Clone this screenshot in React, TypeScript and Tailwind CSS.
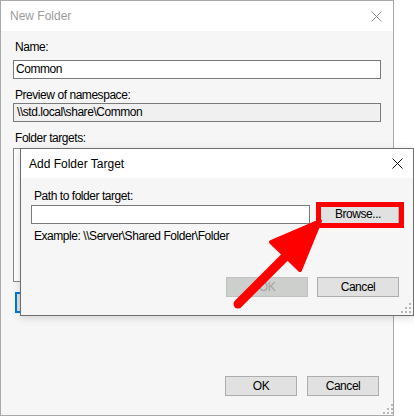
import React from "react";

const sans = "font-['Liberation_Sans',Arial,sans-serif]";

const CloseX = ({ color }: { color: string }) => (
  <svg width="11" height="11" viewBox="0 0 11 11">
    <path d="M0.5 0.5 L10.5 10.5 M10.5 0.5 L0.5 10.5" stroke={color} strokeWidth="1" />
  </svg>
);

const Grip = () => (
  <svg width="10" height="10" viewBox="0 0 10 10">
    {[
      [8, 0],
      [4, 4],
      [8, 4],
      [0, 8],
      [4, 8],
      [8, 8],
    ].map(([x, y], i) => (
      <rect key={i} x={x} y={y} width="2" height="2" fill="#b9b9b9" />
    ))}
  </svg>
);

const Button = ({
  label,
  width,
  disabled,
}: {
  label: string;
  width: string;
  disabled?: boolean;
}) => (
  <div
    className={`${width} h-[20px] flex items-center justify-center border text-[12px] tracking-[-0.45px] leading-none ${
      disabled
        ? "bg-[#cccfcc] border-[#bfc2bf] text-[#a2a5a2]"
        : "bg-[#e1e1e1] border-[#adadad] text-black"
    }`}
  >
    {label}
  </div>
);

export default function App() {
  return (
    <div className={`relative w-[414px] h-[416px] bg-white overflow-hidden ${sans}`}>
      {/* New Folder window */}
      <div className="flex flex-col w-[394px] h-[416px] border border-[#a9a9a9] bg-[#f6f6f6]">
        <div className="h-[30px] shrink-0 bg-white flex items-center justify-between pl-[9px] pr-[11px]">
          <span className="text-[12px] text-[#9b9b9b]">New Folder</span>
          <CloseX color="#8e8e8e" />
        </div>

        <div className="flex flex-col flex-1 px-[12px] pt-[10px] pb-[19px] text-[12px] tracking-[-0.45px] leading-[13px] text-black">
          <span className="ml-[2px]">Name:</span>
          <div className="mt-[6px] h-[19px] w-[368px] bg-white border border-[#7a7a7a] flex items-center px-[2px]">
            Common
          </div>

          <span className="mt-[10px] ml-[2px]">Preview of namespace:</span>
          <div className="mt-[1px] h-[19px] w-[368px] bg-[#f0f0f0] border border-[#7a7a7a] flex items-center px-[3px]">
            \\std.local\share\Common
          </div>

          <span className="mt-[10px] ml-[2px]">Folder targets:</span>
          <div className="mt-[3px] h-[134px] w-[368px] bg-white border border-[#828790]" />

          <div className="mt-[10px] ml-[2px] h-[21px] w-[72px] border-2 border-[#0078d7] bg-[#e1e1e1]" />

          <div className="flex-1" />
          <div className="flex justify-end gap-[10px] pr-[2px]">
            <Button label="OK" width="w-[72px]" />
            <Button label="Cancel" width="w-[72px]" />
          </div>
        </div>
      </div>
      <div className="absolute left-[383px] top-[404px]">
        <Grip />
      </div>

      {/* Add Folder Target dialog */}
      <div className="absolute left-[20px] top-[148px] w-[394px] h-[168px] flex flex-col border border-[#6e6e6e] bg-[#f6f6f6] shadow-[0_2px_8px_rgba(0,0,0,0.15)]">
        <div className="h-[29px] shrink-0 bg-white flex items-center justify-between pl-[8px] pr-[10px]">
          <span className="text-[12px] text-black">Add Folder Target</span>
          <CloseX color="#111111" />
        </div>
        <div className="flex flex-col flex-1 pl-[10px] pr-[14px] pt-[12px] pb-[18px] text-[12px] tracking-[-0.45px] leading-[13px] text-black">
          <span className="ml-[3px]">Path to folder target:</span>
          <div className="mt-[1px] flex items-start gap-[7px]">
            <div className="mt-[1px] h-[19px] w-[279px] bg-white border border-[#7a7a7a]" />
            <Button label="Browse..." width="w-[82px]" />
          </div>
          <span className="mt-[6px] ml-[3px]">Example: \\Server\Shared Folder\Folder</span>
          <div className="flex-1" />
          <div className="flex justify-end gap-[9px]">
            <Button label="OK" width="w-[82px]" disabled />
            <Button label="Cancel" width="w-[82px]" />
          </div>
        </div>
        <div className="absolute right-[2px] bottom-[2px]">
          <Grip />
        </div>
      </div>

      {/* annotation: highlight box */}
      <div className="absolute left-[316px] top-[202px] w-[88px] h-[26px] border-[5px] border-[#ff0000]" />

      {/* annotation: arrow */}
      <svg className="absolute left-0 top-0 pointer-events-none" width="414" height="416" viewBox="0 0 414 416">
        <line x1="238" y1="304" x2="287" y2="255" stroke="#ff0000" strokeWidth="9" strokeLinecap="round" />
        <polygon
          points="271,242 300,270 320,221"
          fill="#ff0000"
          stroke="#ff0000"
          strokeWidth="4"
          strokeLinejoin="round"
        />
      </svg>
    </div>
  );
}
